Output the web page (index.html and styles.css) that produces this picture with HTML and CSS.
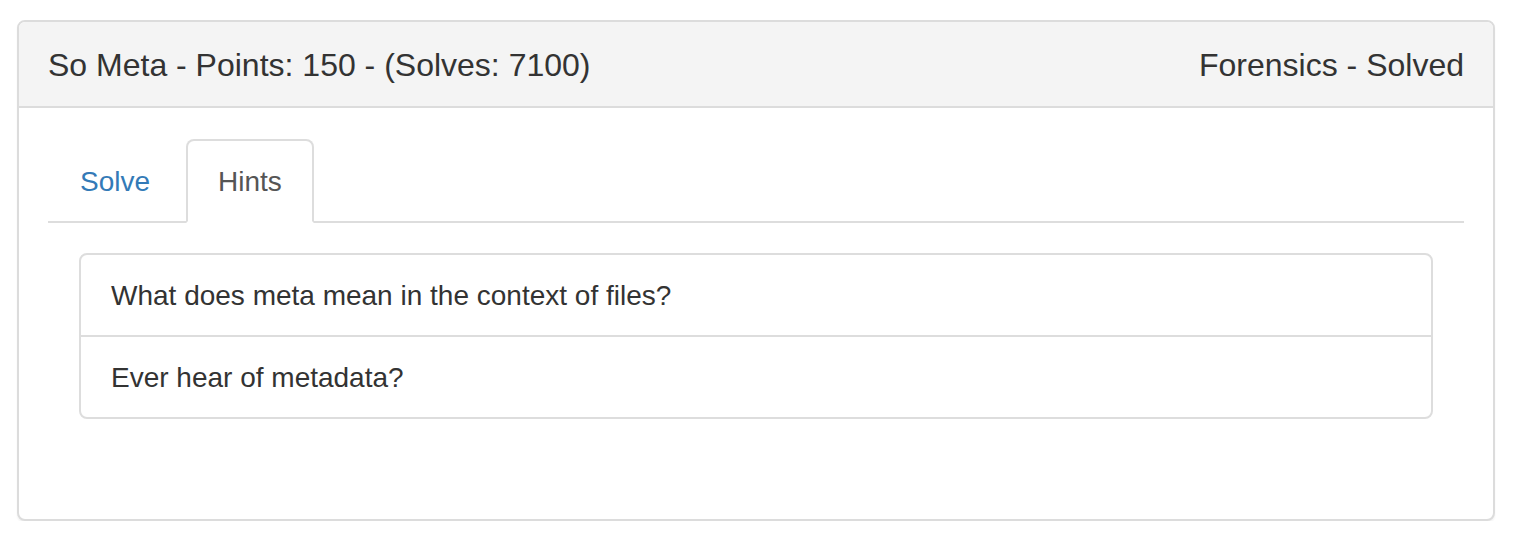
FILE: index.html
```html
<!DOCTYPE html>
<html>
<head>
<meta charset="utf-8">
<link rel="stylesheet" href="styles.css">
</head>
<body>
<div class="page">
  <div class="panel">
    <div class="panel-heading">
      <span class="title">So Meta - Points: 150 - (Solves: 7100)</span>
      <span class="meta">Forensics - Solved</span>
    </div>
    <div class="panel-body">
      <ul class="nav-tabs">
        <li class="tab"><a class="tab-link">Solve</a></li>
        <li class="tab active"><a class="tab-link">Hints</a></li>
      </ul>
      <div class="tab-content">
        <ul class="list-group">
          <li class="list-group-item">What does meta mean in the context of files?</li>
          <li class="list-group-item">Ever hear of metadata?</li>
        </ul>
      </div>
    </div>
  </div>
</div>
</body>
</html>
```

FILE: styles.css
```css
* { box-sizing: border-box; }
html, body { margin: 0; padding: 0; background: #fff; }
body {
  font-family: "Liberation Sans", Arial, sans-serif;
  font-size: 28px;
  line-height: 1.42857;
  color: #333;
}
.page { padding: 20px 25px 0 17px; }
.panel {
  border: 2px solid #dcdcdc;
  border-radius: 8px;
  background: #fff;
  box-shadow: 0 2px 2px rgba(0,0,0,0.05);
  height: 501px;
}
.panel-heading {
  display: flex;
  justify-content: space-between;
  align-items: center;
  padding: 20px 29px 18px 29px;
  background: #f4f4f4;
  border-bottom: 2px solid #dcdcdc;
  border-radius: 6px 6px 0 0;
  font-size: 32px;
  line-height: 46px;
  color: #333;
}
.panel-body { padding: 31px 29px 30px 29px; }
.nav-tabs {
  list-style: none;
  margin: 0;
  padding: 0;
  display: flex;
  border-bottom: 2px solid #ddd;
}
.tab { margin-right: 4px; margin-bottom: -2px; }
.tab-link {
  display: block;
  padding: 21px 30px 19px 30px;
  line-height: 40px;
  border: 2px solid transparent;
  border-radius: 8px 8px 0 0;
  color: #337ab7;
  text-decoration: none;
}
.tab.active .tab-link {
  color: #555;
  background: #fff;
  border-color: #ddd #ddd transparent #ddd;
}
.tab-content { padding: 30px 31px 0 31px; }
.list-group {
  list-style: none;
  margin: 0 0 40px 0;
  padding: 0;
}
.list-group-item {
  padding: 21px 30px 19px 30px;
  line-height: 40px;
  border: 2px solid #ddd;
  margin-bottom: -2px;
  background: #fff;
}
.list-group-item:first-child { border-radius: 8px 8px 0 0; }
.list-group-item:last-child { border-radius: 0 0 8px 8px; margin-bottom: 0; }
```
